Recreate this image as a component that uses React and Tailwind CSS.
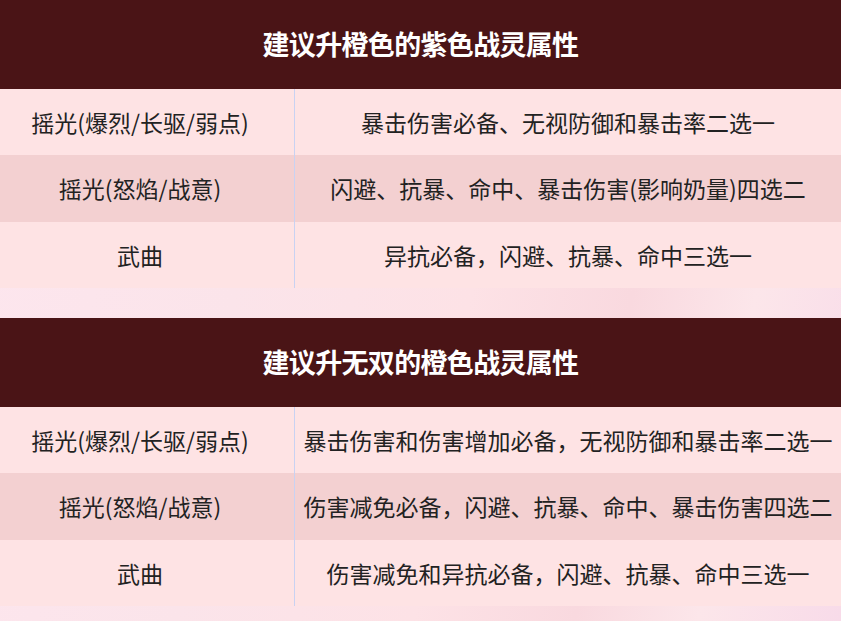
import React from "react";

// Two recommendation tables on a soft pink floral backdrop
const TABLES = [
    {
        title: "建议升橙色的紫色战灵属性",
        rows: [
            ["摇光(爆烈/长驱/弱点)", "暴击伤害必备、无视防御和暴击率二选一"],
            ["摇光(怒焰/战意)", "闪避、抗暴、命中、暴击伤害(影响奶量)四选二"],
            ["武曲", "异抗必备，闪避、抗暴、命中三选一"],
        ],
    },
    {
        title: "建议升无双的橙色战灵属性",
        rows: [
            ["摇光(爆烈/长驱/弱点)", "暴击伤害和伤害增加必备，无视防御和暴击率二选一"],
            ["摇光(怒焰/战意)", "伤害减免必备，闪避、抗暴、命中、暴击伤害四选二"],
            ["武曲", "伤害减免和异抗必备，闪避、抗暴、命中三选一"],
        ],
    },
];

const FONT = { fontFamily: "'Microsoft YaHei', 'Noto Sans CJK SC', 'Noto Sans', sans-serif" };

function InfoTable({ title, rows }) {
    return (
        <div className="w-full">
            <div className="h-[89px] bg-[#4a1416] flex items-center justify-center">
                <h2 className="text-white text-[27px] font-bold tracking-tight">{title}</h2>
            </div>
            {rows.map(([left, right], i) => (
                <div
                    key={left + i}
                    className={
                        i === 1
                            ? "flex h-[67px] bg-[#f3d0d1] text-[#222] text-[23px]"
                            : "flex h-[66px] bg-[#fee3e4] text-[#222] text-[23px]"
                    }
                >
                    <div className="w-[295px] shrink-0 flex items-center justify-center pr-[14px] border-r border-[#c9d2f2] whitespace-nowrap">
                        {left}
                    </div>
                    <div className="flex-1 flex items-center justify-center whitespace-nowrap">
                        {right}
                    </div>
                </div>
            ))}
        </div>
    );
}

export default function App() {
    return (
        <div
            className="w-[841px] h-[621px] overflow-hidden flex flex-col bg-[linear-gradient(100deg,#fde6ee_0%,#fbe4ea_30%,#fde2e6_55%,#f9d9df_72%,#fce6ea_85%,#f8dbe9_100%)]"
            style={FONT}
        >
            <InfoTable {...TABLES[0]} />
            <div className="h-[30px] shrink-0" />
            <InfoTable {...TABLES[1]} />
        </div>
    );
}
